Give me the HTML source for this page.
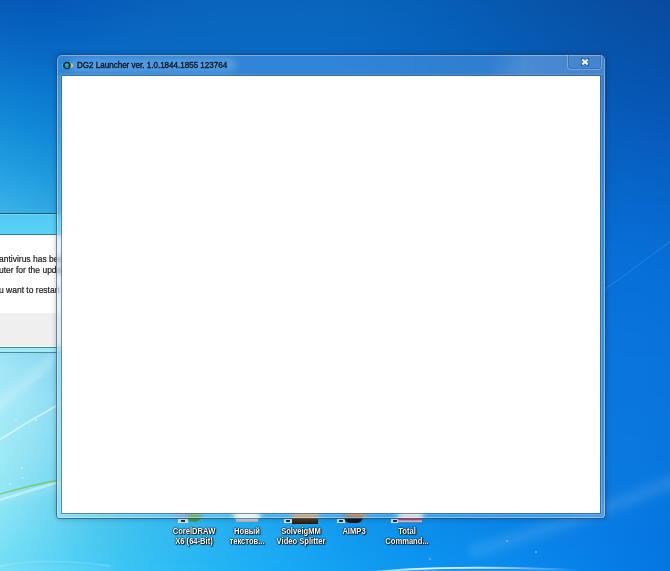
<!DOCTYPE html>
<html><head><meta charset="utf-8">
<style>
html,body{margin:0;padding:0;width:670px;height:571px;overflow:hidden;background:#0a70d0;}
body{position:relative;font-family:"Liberation Sans",sans-serif;}
#bg{position:absolute;left:0;top:0;width:670px;height:571px;overflow:hidden;}
#bg i{position:absolute;left:0;width:670px;height:4px;display:block;}
.abs{position:absolute;}
/* window */
.wout{position:absolute;left:56px;top:54px;width:550px;height:465px;box-sizing:border-box;border-radius:6px 6px 4px 4px;
 border:1px solid rgba(0,25,60,0.52);background:rgba(170,220,255,0.3);backdrop-filter:blur(3px);-webkit-backdrop-filter:blur(3px);
 box-shadow:inset 0 0 0 1px rgba(255,255,255,0.4),0 0 4px 1px rgba(0,25,70,0.2);}
.content{position:absolute;left:62px;top:76px;width:538px;height:437px;background:#fff;
 box-shadow:0 0 0 1px rgba(50,75,100,0.6), 0 0 0 2px rgba(255,255,255,0.12);}
.title{position:absolute;left:77px;top:60.2px;font-size:8.4px;line-height:10px;color:#0a1626;white-space:nowrap;transform-origin:0 0;transform:scaleX(0.96);
 -webkit-text-stroke:0.35px #0a1626;}
.glow{position:absolute;left:70px;top:58px;width:166px;height:14px;border-radius:7px;background:rgba(200,235,255,0.22);filter:blur(3px);}
.lab{position:absolute;top:526.5px;font-size:7.6px;font-weight:bold;line-height:8.9px;color:#fff;text-align:center;white-space:nowrap;transform-origin:50% 0;transform:scaleY(1.1);
 text-shadow:0 0 1px #000,0 0 1px #000,0 0 2px rgba(0,0,0,0.8),1px 1px 1px rgba(0,0,0,0.8);}
</style></head><body>
<div id="bg">
<i style="top:0px;background:linear-gradient(90deg,#075ab8 0px,#0659b8 30px,#0659b8 60px,#075cb9 90px,#085eba 120px,#0a61bb 150px,#0a62bb 180px,#0a63bc 210px,#0a63bc 240px,#0a64bc 270px,#0a64bc 300px,#0a64bc 330px,#0963bb 360px,#0861b9 390px,#085fb7 420px,#075db4 450px,#075ab1 480px,#0757ae 510px,#0755aa 540px,#0852a7 570px,#084fa4 600px,#094da1 630px,#094aa0 660px,#094a9f 670px)"></i>
<i style="top:4px;background:linear-gradient(90deg,#075bb9 0px,#065ab9 30px,#065ab9 60px,#075dba 90px,#085fbb 120px,#0a62bc 150px,#0a63bc 180px,#0a63bc 210px,#0a64bc 240px,#0a64bd 270px,#0a65bd 300px,#0a64bc 330px,#0963bb 360px,#0862ba 390px,#0860b8 420px,#075db5 450px,#075bb2 480px,#0758ae 510px,#0755ab 540px,#0852a8 570px,#0850a5 600px,#094da2 630px,#094ba0 660px,#094aa0 670px)"></i>
<i style="top:8px;background:linear-gradient(90deg,#085dba 0px,#065bba 30px,#065bba 60px,#075ebb 90px,#0860bc 120px,#0a62bc 150px,#0a63bd 180px,#0a64bd 210px,#0a65bd 240px,#0a65bd 270px,#0a65bd 300px,#0a65bd 330px,#0964bc 360px,#0862ba 390px,#0860b8 420px,#075eb6 450px,#075bb2 480px,#0758af 510px,#0755ac 540px,#0853a8 570px,#0850a5 600px,#094ea3 630px,#094ba1 660px,#094ba1 670px)"></i>
<i style="top:12px;background:linear-gradient(90deg,#085ebb 0px,#065cbb 30px,#065cbb 60px,#075ebc 90px,#0961bc 120px,#0a63bd 150px,#0a64bd 180px,#0a65bd 210px,#0a65be 240px,#0a65be 270px,#0a66be 300px,#0a65bd 330px,#0964bc 360px,#0863bb 390px,#0861b9 420px,#075eb6 450px,#075bb3 480px,#0759b0 510px,#0756ac 540px,#0853a9 570px,#0850a6 600px,#094ea3 630px,#094ca2 660px,#094ba1 670px)"></i>
<i style="top:16px;background:linear-gradient(90deg,#085fbc 0px,#065dbc 30px,#065ebc 60px,#075fbc 90px,#0962bd 120px,#0a64be 150px,#0a65be 180px,#0a65be 210px,#0a66be 240px,#0a66be 270px,#0a66be 300px,#0a66be 330px,#0965bd 360px,#0863bc 390px,#0761ba 420px,#075eb7 450px,#075cb4 480px,#0759b0 510px,#0756ad 540px,#0854aa 570px,#0851a7 600px,#084ea4 630px,#094ca2 660px,#094ba2 670px)"></i>
<i style="top:20px;background:linear-gradient(90deg,#0860bd 0px,#065ebc 30px,#065fbd 60px,#0760bd 90px,#0963be 120px,#0a65be 150px,#0a65bf 180px,#0a66bf 210px,#0a66bf 240px,#0a66bf 270px,#0a67bf 300px,#0a66bf 330px,#0965be 360px,#0863bc 390px,#0761ba 420px,#075fb7 450px,#075cb4 480px,#0759b1 510px,#0757ae 540px,#0754aa 570px,#0851a7 600px,#084fa5 630px,#094da3 660px,#094ca3 670px)"></i>
<i style="top:24px;background:linear-gradient(90deg,#0962be 0px,#075fbd 30px,#0660be 60px,#0761be 90px,#0964bf 120px,#0a65bf 150px,#0a66bf 180px,#0a66bf 210px,#0967bf 240px,#0967c0 270px,#0a67bf 300px,#0a67bf 330px,#0965be 360px,#0864bd 390px,#0762bb 420px,#075fb8 450px,#075db5 480px,#075ab2 510px,#0757ae 540px,#0754ab 570px,#0852a8 600px,#084fa5 630px,#084da4 660px,#084ca3 670px)"></i>
<i style="top:28px;background:linear-gradient(90deg,#0963bf 0px,#0761be 30px,#0661bf 60px,#0762bf 90px,#0964bf 120px,#0a66c0 150px,#0a67c0 180px,#0a67c0 210px,#0967c0 240px,#0967c0 270px,#0967c0 300px,#0967c0 330px,#0966bf 360px,#0864bd 390px,#0762bb 420px,#0760b9 450px,#075db6 480px,#075ab2 510px,#0757af 540px,#0755ac 570px,#0852a9 600px,#0850a6 630px,#084da5 660px,#084da4 670px)"></i>
<i style="top:32px;background:linear-gradient(90deg,#0965c0 0px,#0762c0 30px,#0662c0 60px,#0763c0 90px,#0965c0 120px,#0a67c0 150px,#0a67c0 180px,#0a67c0 210px,#0968c1 240px,#0968c1 270px,#0968c1 300px,#0967c0 330px,#0966bf 360px,#0864be 390px,#0762bc 420px,#0760b9 450px,#075db6 480px,#075bb3 510px,#0758b0 540px,#0755ad 570px,#0753aa 600px,#0850a7 630px,#084ea5 660px,#084da5 670px)"></i>
<i style="top:36px;background:linear-gradient(90deg,#0966c1 0px,#0764c1 30px,#0763c1 60px,#0765c1 90px,#0966c1 120px,#0a67c1 150px,#0a68c1 180px,#0968c1 210px,#0968c1 240px,#0968c1 270px,#0968c1 300px,#0968c1 330px,#0967c0 360px,#0865be 390px,#0763bc 420px,#0760ba 450px,#065eb7 480px,#075bb4 510px,#0758b0 540px,#0756ad 570px,#0753aa 600px,#0851a8 630px,#084ea6 660px,#084ea6 670px)"></i>
<i style="top:40px;background:linear-gradient(90deg,#0a68c3 0px,#0765c2 30px,#0765c1 60px,#0766c1 90px,#0867c2 120px,#0a68c2 150px,#0a68c2 180px,#0968c2 210px,#0968c2 240px,#0969c2 270px,#0969c2 300px,#0968c1 330px,#0967c0 360px,#0865bf 390px,#0763bd 420px,#0761ba 450px,#065eb7 480px,#065bb4 510px,#0759b1 540px,#0756ae 570px,#0753ab 600px,#0751a9 630px,#084fa7 660px,#084ea6 670px)"></i>
<i style="top:44px;background:linear-gradient(90deg,#0a69c4 0px,#0867c3 30px,#0766c2 60px,#0767c2 90px,#0868c2 120px,#0969c2 150px,#0a69c2 180px,#0969c2 210px,#0969c2 240px,#0969c2 270px,#0969c2 300px,#0968c2 330px,#0867c1 360px,#0865bf 390px,#0763bd 420px,#0761bb 450px,#065eb8 480px,#065cb5 510px,#0759b2 540px,#0756af 570px,#0754ac 600px,#0751a9 630px,#084fa8 660px,#084fa7 670px)"></i>
<i style="top:48px;background:linear-gradient(90deg,#0a6bc5 0px,#0868c4 30px,#0767c3 60px,#0768c3 90px,#0869c3 120px,#0969c3 150px,#0969c3 180px,#0969c3 210px,#0969c3 240px,#0969c3 270px,#0969c3 300px,#0969c2 330px,#0867c1 360px,#0866c0 390px,#0764be 420px,#0661bb 450px,#065fb9 480px,#065cb6 510px,#0759b3 540px,#0757af 570px,#0754ad 600px,#0752aa 630px,#0750a8 660px,#084fa8 670px)"></i>
<i style="top:52px;background:linear-gradient(90deg,#0b6dc6 0px,#086ac5 30px,#0769c4 60px,#0769c4 90px,#0869c4 120px,#096ac4 150px,#096ac3 180px,#096ac3 210px,#096ac3 240px,#096ac3 270px,#0969c3 300px,#0969c3 330px,#0868c2 360px,#0766c0 390px,#0764be 420px,#0662bc 450px,#065fb9 480px,#065cb6 510px,#065ab3 540px,#0757b0 570px,#0755ad 600px,#0752ab 630px,#0750a9 660px,#074fa9 670px)"></i>
<i style="top:56px;background:linear-gradient(90deg,#0b6ec7 0px,#086bc6 30px,#076ac5 60px,#086ac5 90px,#086ac4 120px,#096ac4 150px,#096ac4 180px,#096ac4 210px,#096ac4 240px,#096ac4 270px,#096ac4 300px,#0969c3 330px,#0868c2 360px,#0766c1 390px,#0764bf 420px,#0662bd 450px,#065fba 480px,#065db7 510px,#065ab4 540px,#0758b1 570px,#0755ae 600px,#0753ac 630px,#0751aa 660px,#0750aa 670px)"></i>
<i style="top:60px;background:linear-gradient(90deg,#0c70c8 0px,#096dc7 30px,#086cc6 60px,#086bc6 90px,#086bc5 120px,#096bc5 150px,#096bc4 180px,#096bc4 210px,#096ac4 240px,#096ac4 270px,#096ac4 300px,#0869c4 330px,#0868c3 360px,#0766c1 390px,#0764bf 420px,#0662bd 450px,#0660ba 480px,#065db8 510px,#065bb5 540px,#0758b2 570px,#0755af 600px,#0753ad 630px,#0751ab 660px,#0750aa 670px)"></i>
<i style="top:64px;background:linear-gradient(90deg,#0c72c9 0px,#096fc8 30px,#086dc7 60px,#086cc6 90px,#086cc6 120px,#096cc5 150px,#096bc5 180px,#096bc5 210px,#086bc5 240px,#086bc5 270px,#086ac5 300px,#086ac4 330px,#0868c3 360px,#0767c2 390px,#0765c0 420px,#0662be 450px,#0660bb 480px,#065eb8 510px,#065bb5 540px,#0758b3 570px,#0756b0 600px,#0753ad 630px,#0751ac 660px,#0751ab 670px)"></i>
<i style="top:68px;background:linear-gradient(90deg,#0d74ca 0px,#0971ca 30px,#086fc8 60px,#086dc7 90px,#086dc6 120px,#096cc6 150px,#096cc6 180px,#086bc5 210px,#086bc5 240px,#086bc5 270px,#086bc5 300px,#086ac5 330px,#0869c4 360px,#0767c2 390px,#0665c0 420px,#0663be 450px,#0660bc 480px,#065eb9 510px,#065bb6 540px,#0659b3 570px,#0756b1 600px,#0654ae 630px,#0752ad 660px,#0751ac 670px)"></i>
<i style="top:72px;background:linear-gradient(90deg,#0d75cc 0px,#0a72cb 30px,#0870c9 60px,#086fc8 90px,#086ec7 120px,#086dc6 150px,#086cc6 180px,#086cc6 210px,#086cc6 240px,#086bc6 270px,#086bc5 300px,#086ac5 330px,#0769c4 360px,#0767c3 390px,#0665c1 420px,#0663bf 450px,#0661bc 480px,#065eba 510px,#065cb7 540px,#0659b4 570px,#0657b1 600px,#0654af 630px,#0752ad 660px,#0752ad 670px)"></i>
<i style="top:76px;background:linear-gradient(90deg,#0e77cd 0px,#0a74cc 30px,#0972ca 60px,#0870c9 90px,#086ec8 120px,#086dc7 150px,#086dc7 180px,#086cc6 210px,#086cc6 240px,#086cc6 270px,#086bc6 300px,#086ac5 330px,#0769c4 360px,#0767c3 390px,#0665c1 420px,#0663bf 450px,#0661bd 480px,#065fba 510px,#065cb8 540px,#065ab5 570px,#0657b2 600px,#0655b0 630px,#0753ae 660px,#0752ae 670px)"></i>
<i style="top:80px;background:linear-gradient(90deg,#0e79ce 0px,#0b76cd 30px,#0973cb 60px,#0871ca 90px,#086fc8 120px,#086ec8 150px,#086dc7 180px,#086dc7 210px,#086cc7 240px,#086cc6 270px,#086bc6 300px,#086bc6 330px,#0769c5 360px,#0768c4 390px,#0666c2 420px,#0664c0 450px,#0661bd 480px,#065fbb 510px,#065db8 540px,#065ab6 570px,#0658b3 600px,#0655b1 630px,#0753af 660px,#0753af 670px)"></i>
<i style="top:84px;background:linear-gradient(90deg,#0f7bcf 0px,#0b77ce 30px,#0975cc 60px,#0972ca 90px,#0870c9 120px,#086fc8 150px,#086ec8 180px,#086dc7 210px,#086dc7 240px,#086cc7 270px,#086cc7 300px,#076bc6 330px,#0769c5 360px,#0768c4 390px,#0666c2 420px,#0664c0 450px,#0662be 480px,#065fbc 510px,#065db9 540px,#065bb6 570px,#0658b4 600px,#0656b2 630px,#0754b0 660px,#0753b0 670px)"></i>
<i style="top:88px;background:linear-gradient(90deg,#0f7dd0 0px,#0c79cf 30px,#0a76cd 60px,#0973cb 90px,#0871ca 120px,#086fc9 150px,#086ec8 180px,#086ec8 210px,#086dc8 240px,#086dc7 270px,#086cc7 300px,#076bc7 330px,#076ac6 360px,#0668c5 390px,#0666c3 420px,#0664c1 450px,#0662bf 480px,#0660bc 510px,#065dba 540px,#065bb7 570px,#0659b5 600px,#0656b3 630px,#0754b1 660px,#0754b0 670px)"></i>
<i style="top:92px;background:linear-gradient(90deg,#107ed1 0px,#0c7bd0 30px,#0a78ce 60px,#0974cc 90px,#0972ca 120px,#0870c9 150px,#086fc9 180px,#086ec8 210px,#086dc8 240px,#086dc8 270px,#076cc8 300px,#076bc7 330px,#076ac6 360px,#0668c5 390px,#0666c3 420px,#0664c1 450px,#0662bf 480px,#0660bd 510px,#065eba 540px,#065bb8 570px,#0659b6 600px,#0657b4 630px,#0755b2 660px,#0754b1 670px)"></i>
<i style="top:96px;background:linear-gradient(90deg,#1080d2 0px,#0d7dd1 30px,#0b79cf 60px,#0976cd 90px,#0973cb 120px,#0871ca 150px,#086fc9 180px,#086ec9 210px,#086ec8 240px,#076dc8 270px,#076cc8 300px,#076bc7 330px,#076ac7 360px,#0668c5 390px,#0666c4 420px,#0665c2 450px,#0662c0 480px,#0660be 510px,#065ebb 540px,#065cb9 570px,#065ab6 600px,#0657b4 630px,#0756b3 660px,#0755b2 670px)"></i>
<i style="top:100px;background:linear-gradient(90deg,#1182d3 0px,#0d7ed2 30px,#0b7bd0 60px,#0a77cd 90px,#0974cc 120px,#0871ca 150px,#0870ca 180px,#086fc9 210px,#086ec9 240px,#076ec9 270px,#076dc8 300px,#076cc8 330px,#066ac7 360px,#0668c6 390px,#0667c4 420px,#0665c3 450px,#0663c0 480px,#0661be 510px,#065fbc 540px,#065cba 570px,#065ab7 600px,#0658b5 630px,#0756b4 660px,#0756b3 670px)"></i>
<i style="top:104px;background:linear-gradient(90deg,#1284d4 0px,#0e80d3 30px,#0c7cd0 60px,#0a78ce 90px,#0975cc 120px,#0872cb 150px,#0870ca 180px,#086fca 210px,#086fc9 240px,#076ec9 270px,#076dc9 300px,#076cc8 330px,#066ac7 360px,#0669c6 390px,#0667c5 420px,#0565c3 450px,#0563c1 480px,#0661bf 510px,#065fbd 540px,#065dba 570px,#065bb8 600px,#0758b6 630px,#0757b5 660px,#0756b4 670px)"></i>
<i style="top:108px;background:linear-gradient(90deg,#1386d5 0px,#0e82d4 30px,#0c7ed1 60px,#0b79cf 90px,#0976cd 120px,#0873cb 150px,#0871cb 180px,#0870ca 210px,#086fca 240px,#076ec9 270px,#076dc9 300px,#076cc9 330px,#066ac8 360px,#0669c7 390px,#0667c5 420px,#0565c4 450px,#0563c2 480px,#0661c0 510px,#065fbd 540px,#065dbb 570px,#065bb9 600px,#0759b7 630px,#0757b5 660px,#0757b5 670px)"></i>
<i style="top:112px;background:linear-gradient(90deg,#1388d6 0px,#0f84d4 30px,#0d7fd2 60px,#0b7bcf 90px,#0a77cd 120px,#0973cc 150px,#0871cb 180px,#0870ca 210px,#086fca 240px,#076fca 270px,#076dca 300px,#076cc9 330px,#066bc8 360px,#0669c7 390px,#0567c6 420px,#0565c4 450px,#0564c2 480px,#0662c0 510px,#0660be 540px,#065ebc 570px,#075cba 600px,#075ab8 630px,#0758b6 660px,#0757b6 670px)"></i>
<i style="top:116px;background:linear-gradient(90deg,#1489d7 0px,#1085d5 30px,#0d81d3 60px,#0c7cd0 90px,#0a78ce 120px,#0974cc 150px,#0872cb 180px,#0871cb 210px,#0870cb 240px,#076fca 270px,#076eca 300px,#066cc9 330px,#066bc9 360px,#0669c8 390px,#0567c6 420px,#0566c5 450px,#0564c3 480px,#0662c1 510px,#0660bf 540px,#065ebd 570px,#075cbb 600px,#075ab9 630px,#0758b7 660px,#0758b7 670px)"></i>
<i style="top:120px;background:linear-gradient(90deg,#158bd7 0px,#1087d6 30px,#0e82d3 60px,#0c7dd1 90px,#0a79cf 120px,#0975cd 150px,#0873cc 180px,#0871cb 210px,#0870cb 240px,#076fcb 270px,#076eca 300px,#066dca 330px,#066bc9 360px,#0669c8 390px,#0568c7 420px,#0566c5 450px,#0564c3 480px,#0662c2 510px,#0661c0 540px,#065fbe 570px,#075dbc 600px,#075bba 630px,#0759b8 660px,#0758b8 670px)"></i>
<i style="top:124px;background:linear-gradient(90deg,#168dd8 0px,#1189d7 30px,#0f84d4 60px,#0d7fd1 90px,#0b7acf 120px,#0976cd 150px,#0873cc 180px,#0872cc 210px,#0871cb 240px,#0770cb 270px,#076ecb 300px,#066dca 330px,#066bc9 360px,#056ac8 390px,#0568c7 420px,#0566c6 450px,#0564c4 480px,#0663c2 510px,#0661c0 540px,#065fbe 570px,#075dbd 600px,#075bbb 630px,#075ab9 660px,#0759b9 670px)"></i>
<i style="top:128px;background:linear-gradient(90deg,#178fd9 0px,#128ad8 30px,#1085d5 60px,#0e80d2 90px,#0b7bd0 120px,#0a76ce 150px,#0974cd 180px,#0873cc 210px,#0871cc 240px,#0770cb 270px,#076fcb 300px,#066dca 330px,#066bca 360px,#056ac9 390px,#0568c8 420px,#0566c6 450px,#0565c5 480px,#0663c3 510px,#0661c1 540px,#0660bf 570px,#075ebd 600px,#075cbc 630px,#075aba 660px,#075aba 670px)"></i>
<i style="top:132px;background:linear-gradient(90deg,#1891da 0px,#138cd8 30px,#1187d5 60px,#0e81d3 90px,#0c7cd0 120px,#0a77ce 150px,#0975cd 180px,#0873cd 210px,#0872cc 240px,#0770cc 270px,#076fcb 300px,#066dcb 330px,#066cca 360px,#056ac9 390px,#0568c8 420px,#0567c7 450px,#0565c5 480px,#0563c4 510px,#0662c2 540px,#0660c0 570px,#075ebe 600px,#075dbd 630px,#075bbb 660px,#075abb 670px)"></i>
<i style="top:136px;background:linear-gradient(90deg,#1992db 0px,#148ed9 30px,#1288d6 60px,#0f83d3 90px,#0c7dd1 120px,#0a78cf 150px,#0975ce 180px,#0974cd 210px,#0872cd 240px,#0771cc 270px,#076fcc 300px,#066dcb 330px,#066cca 360px,#056aca 390px,#0568c8 420px,#0567c7 450px,#0565c6 480px,#0564c4 510px,#0662c3 540px,#0661c1 570px,#075fbf 600px,#075dbd 630px,#085bbc 660px,#075bbb 670px)"></i>
<i style="top:140px;background:linear-gradient(90deg,#1a94db 0px,#1590da 30px,#138ad7 60px,#1084d4 90px,#0d7ed1 120px,#0b79cf 150px,#0a76ce 180px,#0974ce 210px,#0873cd 240px,#0771cd 270px,#076fcc 300px,#066ecc 330px,#056ccb 360px,#056aca 390px,#0569c9 420px,#0567c8 450px,#0566c6 480px,#0564c5 510px,#0663c3 540px,#0661c2 570px,#075fc0 600px,#085ebe 630px,#085cbd 660px,#085cbc 670px)"></i>
<i style="top:144px;background:linear-gradient(90deg,#1c96dc 0px,#1691da 30px,#148cd7 60px,#1185d5 90px,#0e7fd2 120px,#0b7ad0 150px,#0a77cf 180px,#0975ce 210px,#0873ce 240px,#0772cd 270px,#0770cd 300px,#066ecc 330px,#056ccb 360px,#056aca 390px,#0569c9 420px,#0567c8 450px,#0566c7 480px,#0564c5 510px,#0663c4 540px,#0662c3 570px,#0760c1 600px,#085ebf 630px,#085dbe 660px,#085cbd 670px)"></i>
<i style="top:148px;background:linear-gradient(90deg,#1d98dd 0px,#1793db 30px,#158dd8 60px,#1287d5 90px,#0f80d3 120px,#0c7bd0 150px,#0a78cf 180px,#0976cf 210px,#0874ce 240px,#0772cd 270px,#0770cd 300px,#066ecc 330px,#056ccc 360px,#056acb 390px,#0569ca 420px,#0567c9 450px,#0566c7 480px,#0565c6 510px,#0663c5 540px,#0762c3 570px,#0761c2 600px,#085fc0 630px,#085dbf 660px,#085dbe 670px)"></i>
<i style="top:152px;background:linear-gradient(90deg,#1e99dd 0px,#1895db 30px,#168fd9 60px,#1388d6 90px,#0f82d3 120px,#0d7cd1 150px,#0b79d0 180px,#0a77cf 210px,#0975ce 240px,#0872ce 270px,#0770cd 300px,#066ecd 330px,#056ccc 360px,#056bcb 390px,#0569ca 420px,#0568c9 450px,#0566c8 480px,#0565c7 510px,#0664c5 540px,#0763c4 570px,#0761c3 600px,#0860c1 630px,#085ec0 660px,#085dbf 670px)"></i>
<i style="top:156px;background:linear-gradient(90deg,#209bde 0px,#1a96dc 30px,#1790d9 60px,#148ad6 90px,#1083d4 120px,#0d7dd2 150px,#0b7ad0 180px,#0a77cf 210px,#0975cf 240px,#0873ce 270px,#0771ce 300px,#066ecd 330px,#056dcc 360px,#056bcb 390px,#0569cb 420px,#0568ca 450px,#0567c8 480px,#0566c7 510px,#0664c6 540px,#0763c5 570px,#0762c4 600px,#0860c2 630px,#085fc1 660px,#085ec0 670px)"></i>
<i style="top:160px;background:linear-gradient(90deg,#219ddf 0px,#1b98dd 30px,#1892da 60px,#158bd7 90px,#1184d4 120px,#0e7ed2 150px,#0c7bd1 180px,#0b78d0 210px,#0976cf 240px,#0873cf 270px,#0771ce 300px,#066fcd 330px,#056dcd 360px,#056bcc 390px,#0569cb 420px,#0568ca 450px,#0567c9 480px,#0566c8 510px,#0665c7 540px,#0764c6 570px,#0762c4 600px,#0861c3 630px,#085fc2 660px,#085fc1 670px)"></i>
<i style="top:164px;background:linear-gradient(90deg,#239fdf 0px,#1c9add 30px,#1994da 60px,#168dd8 90px,#1286d5 120px,#0f80d3 150px,#0d7cd1 180px,#0b79d0 210px,#0976d0 240px,#0874cf 270px,#0771ce 300px,#066fce 330px,#056dcd 360px,#056bcc 390px,#046acb 420px,#0568ca 450px,#0567ca 480px,#0566c9 510px,#0665c8 540px,#0764c7 570px,#0763c5 600px,#0861c4 630px,#0860c3 660px,#085fc2 670px)"></i>
<i style="top:168px;background:linear-gradient(90deg,#25a0e0 0px,#1e9bde 30px,#1b95db 60px,#178ed8 90px,#1487d6 120px,#1081d3 150px,#0d7dd2 180px,#0c7ad1 210px,#0a77d0 240px,#0874cf 270px,#0772cf 300px,#066fce 330px,#056dcd 360px,#056bcd 390px,#046acc 420px,#0569cb 450px,#0568ca 480px,#0567c9 510px,#0666c8 540px,#0765c7 570px,#0763c6 600px,#0862c5 630px,#0861c4 660px,#0860c3 670px)"></i>
<i style="top:172px;background:linear-gradient(90deg,#26a2e0 0px,#209dde 30px,#1c97dc 60px,#1990d9 90px,#1589d6 120px,#1182d4 150px,#0e7ed2 180px,#0c7bd1 210px,#0a78d0 240px,#0875d0 270px,#0772cf 300px,#066fce 330px,#056dce 360px,#056bcd 390px,#046acc 420px,#0569cb 450px,#0568cb 480px,#0567ca 510px,#0666c9 540px,#0765c8 570px,#0764c7 600px,#0863c6 630px,#0861c4 660px,#0861c4 670px)"></i>
<i style="top:176px;background:linear-gradient(90deg,#28a4e1 0px,#219fdf 30px,#1e98dc 60px,#1a91d9 90px,#168ad7 120px,#1284d4 150px,#0f7fd3 180px,#0d7cd2 210px,#0b78d1 240px,#0975d0 270px,#0772cf 300px,#0670cf 330px,#056dce 360px,#046ccd 390px,#046acd 420px,#0469cc 450px,#0568cb 480px,#0567ca 510px,#0666ca 540px,#0766c9 570px,#0765c8 600px,#0863c7 630px,#0862c5 660px,#0861c5 670px)"></i>
<i style="top:180px;background:linear-gradient(90deg,#2aa6e2 0px,#23a1e0 30px,#1f9add 60px,#1c93da 90px,#178bd7 120px,#1385d5 150px,#1080d3 180px,#0d7dd2 210px,#0b79d1 240px,#0976d0 270px,#0773d0 300px,#0670cf 330px,#056ece 360px,#046cce 390px,#046acd 420px,#0469cc 450px,#0568cc 480px,#0568cb 510px,#0667ca 540px,#0766ca 570px,#0765c9 600px,#0864c8 630px,#0863c6 660px,#0862c6 670px)"></i>
<i style="top:184px;background:linear-gradient(90deg,#2ca7e2 0px,#25a2e0 30px,#219cdd 60px,#1d94db 90px,#198dd8 120px,#1486d6 150px,#1182d4 180px,#0e7ed3 210px,#0b7ad2 240px,#0976d1 270px,#0773d0 300px,#0670cf 330px,#056ecf 360px,#046cce 390px,#046bcd 420px,#0469cd 450px,#0569cc 480px,#0568cc 510px,#0667cb 540px,#0767ca 570px,#0766ca 600px,#0865c9 630px,#0863c7 660px,#0863c7 670px)"></i>
<i style="top:188px;background:linear-gradient(90deg,#2fa9e3 0px,#27a4e1 30px,#239dde 60px,#1f96db 90px,#1a8ed8 120px,#1588d6 150px,#1283d4 180px,#0f7ed3 210px,#0c7bd2 240px,#0977d1 270px,#0773d0 300px,#0670d0 330px,#056ecf 360px,#046cce 390px,#046bce 420px,#046acd 450px,#0569cd 480px,#0568cc 510px,#0668cc 540px,#0767cb 570px,#0766cb 600px,#0865ca 630px,#0864c8 660px,#0863c8 670px)"></i>
<i style="top:192px;background:linear-gradient(90deg,#31abe3 0px,#29a5e1 30px,#259fdf 60px,#2097dc 90px,#1b90d9 120px,#1789d7 150px,#1384d5 180px,#0f7fd4 210px,#0c7bd2 240px,#0a77d2 270px,#0874d1 300px,#0671d0 330px,#056ecf 360px,#046ccf 390px,#046bce 420px,#046ace 450px,#0569cd 480px,#0569cd 510px,#0668cc 540px,#0768cc 570px,#0767cb 600px,#0866cb 630px,#0865c9 660px,#0764c9 670px)"></i>
<i style="top:196px;background:linear-gradient(90deg,#33ace4 0px,#2ca7e2 30px,#27a0df 60px,#2299dc 90px,#1d91da 120px,#188bd7 150px,#1485d5 180px,#1080d4 210px,#0d7cd3 240px,#0a78d2 270px,#0874d1 300px,#0671d0 330px,#056ed0 360px,#046dcf 390px,#046bcf 420px,#046ace 450px,#0569ce 480px,#0569cd 510px,#0668cd 540px,#0768cd 570px,#0767cc 600px,#0767cb 630px,#0765ca 660px,#0765ca 670px)"></i>
<i style="top:200px;background:linear-gradient(90deg,#36aee5 0px,#2ea9e2 30px,#29a2e0 60px,#249bdd 90px,#1e93da 120px,#198cd8 150px,#1586d6 180px,#1181d4 210px,#0d7dd3 240px,#0a79d2 270px,#0875d1 300px,#0671d1 330px,#056fd0 360px,#046dcf 390px,#046bcf 420px,#046ace 450px,#056ace 480px,#0569ce 510px,#0669ce 540px,#0769cd 570px,#0768cd 600px,#0767cc 630px,#0766cb 660px,#0765ca 670px)"></i>
<i style="top:204px;background:linear-gradient(90deg,#38b0e5 0px,#31aae3 30px,#2ba4e0 60px,#269cde 90px,#2095db 120px,#1a8ed8 150px,#1688d6 180px,#1183d5 210px,#0e7ed4 240px,#0b79d3 270px,#0875d2 300px,#0672d1 330px,#056fd0 360px,#046dd0 390px,#046ccf 420px,#046bcf 450px,#056acf 480px,#056ace 510px,#0669ce 540px,#0769ce 570px,#0769ce 600px,#0768cd 630px,#0767cc 660px,#0766cb 670px)"></i>
<i style="top:208px;background:linear-gradient(90deg,#3bb1e6 0px,#33ace4 30px,#2da5e1 60px,#279ede 90px,#2296db 120px,#1c8fd9 150px,#1789d7 180px,#1284d5 210px,#0e7fd4 240px,#0b7ad3 270px,#0875d2 300px,#0672d1 330px,#056fd1 360px,#046dd0 390px,#046cd0 420px,#046bcf 450px,#056acf 480px,#056acf 510px,#066acf 540px,#0769cf 570px,#0769cf 600px,#0769ce 630px,#0767cd 660px,#0767cc 670px)"></i>
<i style="top:212px;background:linear-gradient(90deg,#3db3e6 0px,#36aee4 30px,#2fa7e2 60px,#299fdf 90px,#2398dc 120px,#1d90d9 150px,#188ad7 180px,#1385d6 210px,#0f7fd5 240px,#0b7ad3 270px,#0976d2 300px,#0672d2 330px,#056fd1 360px,#046dd0 390px,#046cd0 420px,#046bd0 450px,#056bcf 480px,#056acf 510px,#066acf 540px,#076acf 570px,#076acf 600px,#0769cf 630px,#0768ce 660px,#0767cd 670px)"></i>
<i style="top:216px;background:linear-gradient(90deg,#40b5e7 0px,#38afe5 30px,#32a8e2 60px,#2ba1df 90px,#2599dc 120px,#1f92da 150px,#198bd8 180px,#1486d6 210px,#1080d5 240px,#0c7bd4 270px,#0976d3 300px,#0772d2 330px,#0570d1 360px,#046dd1 390px,#046cd0 420px,#046bd0 450px,#056bd0 480px,#066bd0 510px,#066ad0 540px,#076ad0 570px,#076ad0 600px,#076ad0 630px,#0768ce 660px,#0768ce 670px)"></i>
<i style="top:220px;background:linear-gradient(90deg,#43b6e7 0px,#3bb1e5 30px,#34aae3 60px,#2da2e0 90px,#279bdd 120px,#2093db 150px,#1a8dd8 180px,#1587d7 210px,#1081d5 240px,#0c7cd4 270px,#0977d3 300px,#0773d2 330px,#0570d2 360px,#046ed1 390px,#046cd1 420px,#046cd0 450px,#056bd0 480px,#066bd0 510px,#066bd0 540px,#076bd1 570px,#076bd1 600px,#076ad1 630px,#0769cf 660px,#0768cf 670px)"></i>
<i style="top:224px;background:linear-gradient(90deg,#45b8e8 0px,#3db2e6 30px,#36ace3 60px,#2fa4e0 90px,#289cde 120px,#2295db 150px,#1b8ed9 180px,#1688d7 210px,#1182d6 240px,#0d7cd4 270px,#0977d3 300px,#0773d3 330px,#0570d2 360px,#046ed1 390px,#046dd1 420px,#046cd1 450px,#056bd1 480px,#066bd1 510px,#066bd1 540px,#076bd1 570px,#076bd2 600px,#076bd1 630px,#076ad0 660px,#0769cf 670px)"></i>
<i style="top:228px;background:linear-gradient(90deg,#48bae8 0px,#40b4e6 30px,#39ade4 60px,#32a6e1 90px,#2a9ede 120px,#2396dc 150px,#1c8fd9 180px,#1689d8 210px,#1183d6 240px,#0d7dd5 270px,#0a78d4 300px,#0773d3 330px,#0570d2 360px,#046ed2 390px,#046dd1 420px,#046cd1 450px,#056cd1 480px,#066bd1 510px,#066cd2 540px,#076cd2 570px,#076cd2 600px,#076bd2 630px,#076ad1 660px,#076ad0 670px)"></i>
<i style="top:232px;background:linear-gradient(90deg,#4bbbe9 0px,#43b6e7 30px,#3bafe4 60px,#34a7e1 90px,#2c9fdf 120px,#2498dc 150px,#1d91da 180px,#178ad8 210px,#1284d6 240px,#0d7dd5 270px,#0a78d4 300px,#0774d3 330px,#0570d2 360px,#056ed2 390px,#046dd2 420px,#046cd2 450px,#056cd2 480px,#066cd2 510px,#066cd2 540px,#076cd2 570px,#076cd3 600px,#076cd3 630px,#076bd2 660px,#076ad1 670px)"></i>
<i style="top:236px;background:linear-gradient(90deg,#4ebdea 0px,#46b7e7 30px,#3eb0e5 60px,#36a9e2 90px,#2ea1df 120px,#2699dd 150px,#1f92da 180px,#188bd8 210px,#1384d7 240px,#0e7ed6 270px,#0a79d4 300px,#0774d3 330px,#0671d3 360px,#056fd2 390px,#046dd2 420px,#056cd2 450px,#056cd2 480px,#066cd2 510px,#066cd3 540px,#076dd3 570px,#076dd4 600px,#076dd4 630px,#076bd2 660px,#076bd2 670px)"></i>
<i style="top:240px;background:linear-gradient(90deg,#51beea 0px,#48b9e8 30px,#40b2e5 60px,#38aae3 90px,#30a2e0 120px,#289add 150px,#2093db 180px,#198cd9 210px,#1385d7 240px,#0e7fd6 270px,#0a79d5 300px,#0774d4 330px,#0671d3 360px,#056fd3 390px,#046dd2 420px,#056dd2 450px,#056cd2 480px,#066cd3 510px,#066dd3 540px,#076dd4 570px,#076dd4 600px,#076dd4 630px,#076cd3 660px,#076bd2 670px)"></i>
<i style="top:244px;background:linear-gradient(90deg,#54c0eb 0px,#4bbae9 30px,#43b3e6 60px,#3aace3 90px,#32a4e0 120px,#299cde 150px,#2194db 180px,#1a8dd9 210px,#1486d8 240px,#0f7fd6 270px,#0b79d5 300px,#0875d4 330px,#0671d3 360px,#056fd3 390px,#046ed3 420px,#056dd3 450px,#056dd3 480px,#066dd3 510px,#066dd4 540px,#076dd4 570px,#076ed5 600px,#076ed5 630px,#076cd4 660px,#076cd3 670px)"></i>
<i style="top:248px;background:linear-gradient(90deg,#57c1eb 0px,#4ebce9 30px,#45b5e6 60px,#3dade4 90px,#33a5e1 120px,#2b9dde 150px,#2296dc 180px,#1b8eda 210px,#1587d8 240px,#0f80d7 270px,#0b7ad5 300px,#0875d4 330px,#0671d4 360px,#056fd3 390px,#046ed3 420px,#056dd3 450px,#056dd3 480px,#066dd3 510px,#076dd4 540px,#076ed5 570px,#076ed5 600px,#076ed5 630px,#076dd4 660px,#076cd4 670px)"></i>
<i style="top:252px;background:linear-gradient(90deg,#59c3ec 0px,#51bdea 30px,#48b6e7 60px,#3fafe4 90px,#35a6e1 120px,#2c9edf 150px,#2497dc 180px,#1c8fda 210px,#1588d8 240px,#1081d7 270px,#0b7ad6 300px,#0875d5 330px,#0672d4 360px,#056fd3 390px,#056ed3 420px,#056dd3 450px,#056dd3 480px,#066dd4 510px,#076ed4 540px,#076ed5 570px,#076ed6 600px,#076ed6 630px,#076dd5 660px,#076dd4 670px)"></i>
<i style="top:256px;background:linear-gradient(90deg,#5cc5ec 0px,#54bfea 30px,#4bb8e7 60px,#41b0e5 90px,#37a8e2 120px,#2ea0df 150px,#2598dd 180px,#1d90db 210px,#1689d9 240px,#1081d7 270px,#0c7bd6 300px,#0876d5 330px,#0672d4 360px,#0570d4 390px,#056ed4 420px,#056ed4 450px,#056ed4 480px,#066ed4 510px,#076ed5 540px,#076ed6 570px,#076fd6 600px,#076fd7 630px,#076ed5 660px,#076dd5 670px)"></i>
<i style="top:260px;background:linear-gradient(90deg,#5fc6ed 0px,#57c0eb 30px,#4db9e8 60px,#43b2e5 90px,#39a9e2 120px,#2fa1df 150px,#2699dd 180px,#1e91db 210px,#178ad9 240px,#1182d8 270px,#0c7bd6 300px,#0876d5 330px,#0672d4 360px,#0570d4 390px,#056fd4 420px,#056ed4 450px,#056ed4 480px,#066ed5 510px,#076ed5 540px,#076fd6 570px,#086fd7 600px,#076fd7 630px,#076ed6 660px,#076dd5 670px)"></i>
<i style="top:264px;background:linear-gradient(90deg,#62c8ed 0px,#59c2eb 30px,#50bbe8 60px,#46b3e6 90px,#3babe3 120px,#31a2e0 150px,#279ade 180px,#1f92db 210px,#178ada 240px,#1183d8 270px,#0c7cd7 300px,#0976d5 330px,#0673d5 360px,#0570d4 390px,#056fd4 420px,#056ed4 450px,#056ed4 480px,#066ed5 510px,#076fd6 540px,#076fd6 570px,#086fd7 600px,#0770d7 630px,#076ed6 660px,#076ed6 670px)"></i>
<i style="top:268px;background:linear-gradient(90deg,#65c9ee 0px,#5cc3ec 30px,#52bce9 60px,#48b4e6 90px,#3dace3 120px,#32a4e0 150px,#289cde 180px,#2094dc 210px,#188bda 240px,#1283d8 270px,#0d7cd7 300px,#0977d6 330px,#0673d5 360px,#0571d5 390px,#056fd4 420px,#056fd5 450px,#056ed5 480px,#066fd5 510px,#076fd6 540px,#086fd7 570px,#0870d7 600px,#0770d8 630px,#076fd7 660px,#076ed6 670px)"></i>
<i style="top:272px;background:linear-gradient(90deg,#68cbee 0px,#5fc5ec 30px,#55bee9 60px,#4ab6e7 90px,#3fade4 120px,#34a5e1 150px,#2a9dde 180px,#2195dc 210px,#198cda 240px,#1284d9 270px,#0d7dd7 300px,#0977d6 330px,#0773d5 360px,#0571d5 390px,#0570d5 420px,#056fd5 450px,#066fd5 480px,#066fd6 510px,#076fd6 540px,#0870d7 570px,#0870d8 600px,#0870d8 630px,#076fd7 660px,#076ed6 670px)"></i>
<i style="top:276px;background:linear-gradient(90deg,#6bccef 0px,#62c6ed 30px,#58bfea 60px,#4cb7e7 90px,#41afe4 120px,#35a6e1 150px,#2b9edf 180px,#2196dd 210px,#198ddb 240px,#1385d9 270px,#0d7dd7 300px,#0977d6 330px,#0773d6 360px,#0571d5 390px,#0570d5 420px,#056fd5 450px,#066fd5 480px,#066fd6 510px,#076fd7 540px,#0870d7 570px,#0870d8 600px,#0870d8 630px,#076fd7 660px,#076fd7 670px)"></i>
<i style="top:280px;background:linear-gradient(90deg,#6ecdef 0px,#65c8ed 30px,#5ac1ea 60px,#4fb8e7 90px,#43b0e4 120px,#37a7e2 150px,#2c9fdf 180px,#2297dd 210px,#1a8edb 240px,#1385d9 270px,#0e7ed8 300px,#0978d7 330px,#0774d6 360px,#0671d5 390px,#0570d5 420px,#056fd5 450px,#066fd6 480px,#066fd6 510px,#0770d7 540px,#0870d8 570px,#0871d9 600px,#0871d9 630px,#0870d8 660px,#086fd7 670px)"></i>
<i style="top:284px;background:linear-gradient(90deg,#71cff0 0px,#68c9ed 30px,#5dc2eb 60px,#51bae8 90px,#44b1e5 120px,#38a9e2 150px,#2da0e0 180px,#2398dd 210px,#1b8fdb 240px,#1486da 270px,#0e7ed8 300px,#0a78d7 330px,#0774d6 360px,#0672d6 390px,#0570d6 420px,#0570d6 450px,#066fd6 480px,#0670d7 510px,#0770d7 540px,#0871d8 570px,#0871d9 600px,#0871d9 630px,#0870d8 660px,#086fd8 670px)"></i>
<i style="top:288px;background:linear-gradient(90deg,#73d0f0 0px,#6acbee 30px,#5fc3eb 60px,#53bbe8 90px,#46b2e5 120px,#3aaae2 150px,#2ea1e0 180px,#2498de 210px,#1b8fdc 240px,#1487da 270px,#0e7fd8 300px,#0a78d7 330px,#0775d6 360px,#0672d6 390px,#0571d6 420px,#0570d6 450px,#0670d6 480px,#0770d7 510px,#0770d8 540px,#0871d8 570px,#0871d9 600px,#0871d9 630px,#0870d8 660px,#0870d8 670px)"></i>
<i style="top:292px;background:linear-gradient(90deg,#76d2f0 0px,#6dccee 30px,#62c5ec 60px,#55bce9 90px,#48b4e6 120px,#3babe3 150px,#2fa2e0 180px,#2599de 210px,#1c90dc 240px,#1587da 270px,#0f7fd9 300px,#0a79d7 330px,#0775d7 360px,#0673d6 390px,#0571d6 420px,#0570d6 450px,#0670d7 480px,#0770d7 510px,#0771d8 540px,#0871d9 570px,#0971d9 600px,#0871da 630px,#0870d9 660px,#0870d8 670px)"></i>
<i style="top:296px;background:linear-gradient(90deg,#79d3f1 0px,#70cdef 30px,#64c6ec 60px,#57bee9 90px,#4ab5e6 120px,#3dace3 150px,#31a3e1 180px,#269ade 210px,#1d91dc 240px,#1588da 270px,#0f80d9 300px,#0a79d8 330px,#0875d7 360px,#0673d7 390px,#0671d6 420px,#0671d7 450px,#0670d7 480px,#0771d7 510px,#0871d8 540px,#0871d9 570px,#0972da 600px,#0872da 630px,#0871d9 660px,#0870d8 670px)"></i>
<i style="top:300px;background:linear-gradient(90deg,#7cd4f1 0px,#73cfef 30px,#67c7ed 60px,#59bfe9 90px,#4cb6e6 120px,#3eade4 150px,#32a4e1 180px,#279bdf 210px,#1d92dd 240px,#1689db 270px,#0f80d9 300px,#0b7ad8 330px,#0876d7 360px,#0673d7 390px,#0672d7 420px,#0671d7 450px,#0671d7 480px,#0771d8 510px,#0871d8 540px,#0872d9 570px,#0972da 600px,#0972da 630px,#0871d9 660px,#0870d9 670px)"></i>
<i style="top:304px;background:linear-gradient(90deg,#7fd6f2 0px,#75d0f0 30px,#69c9ed 60px,#5cc0ea 90px,#4db7e7 120px,#3faee4 150px,#33a5e1 180px,#289cdf 210px,#1e92dd 240px,#1689db 270px,#1081da 300px,#0b7ad8 330px,#0876d8 360px,#0674d7 390px,#0672d7 420px,#0671d7 450px,#0671d7 480px,#0771d8 510px,#0871d9 540px,#0872d9 570px,#0972da 600px,#0972da 630px,#0871da 660px,#0871d9 670px)"></i>
<i style="top:308px;background:linear-gradient(90deg,#81d7f2 0px,#78d1f0 30px,#6ccaed 60px,#5ec1ea 90px,#4fb8e7 120px,#41afe4 150px,#34a6e2 180px,#289ddf 210px,#1f93dd 240px,#178adb 270px,#1082da 300px,#0b7bd9 330px,#0877d8 360px,#0774d7 390px,#0672d7 420px,#0672d7 450px,#0671d8 480px,#0771d8 510px,#0872d9 540px,#0872da 570px,#0972da 600px,#0972da 630px,#0871da 660px,#0871d9 670px)"></i>
<i style="top:312px;background:linear-gradient(90deg,#84d8f3 0px,#7bd3f0 30px,#6ecbee 60px,#60c2eb 90px,#51b9e7 120px,#42b0e5 150px,#35a7e2 180px,#299de0 210px,#1f94de 240px,#178bdc 270px,#1182da 300px,#0c7cd9 330px,#0977d8 360px,#0775d8 390px,#0673d7 420px,#0672d8 450px,#0672d8 480px,#0772d8 510px,#0872d9 540px,#0972da 570px,#0973db 600px,#0973db 630px,#0972da 660px,#0871d9 670px)"></i>
<i style="top:316px;background:linear-gradient(90deg,#87daf3 0px,#7dd4f1 30px,#70ccee 60px,#61c3eb 90px,#52bae8 120px,#43b1e5 150px,#36a8e2 180px,#2a9ee0 210px,#2095de 240px,#188bdc 270px,#1183da 300px,#0c7cd9 330px,#0978d8 360px,#0775d8 390px,#0673d8 420px,#0672d8 450px,#0672d8 480px,#0772d9 510px,#0872d9 540px,#0973da 570px,#0973db 600px,#0973db 630px,#0972da 660px,#0871da 670px)"></i>
<i style="top:320px;background:linear-gradient(90deg,#89dbf3 0px,#80d5f1 30px,#73cdee 60px,#63c4eb 90px,#54bbe8 120px,#45b2e5 150px,#37a8e3 180px,#2b9fe0 210px,#2195de 240px,#188cdc 270px,#1184db 300px,#0c7dda 330px,#0978d9 360px,#0775d8 390px,#0674d8 420px,#0673d8 450px,#0772d8 480px,#0772d9 510px,#0872da 540px,#0973da 570px,#0973db 600px,#0973db 630px,#0972da 660px,#0872da 670px)"></i>
<i style="top:324px;background:linear-gradient(90deg,#8cdcf4 0px,#82d6f2 30px,#75ceef 60px,#65c5ec 90px,#55bce8 120px,#46b2e5 150px,#38a9e3 180px,#2ca0e1 210px,#2196de 240px,#198ddd 270px,#1284db 300px,#0d7dda 330px,#0979d9 360px,#0776d8 390px,#0774d8 420px,#0673d8 450px,#0772d9 480px,#0772d9 510px,#0873da 540px,#0973db 570px,#0973db 600px,#0973db 630px,#0972db 660px,#0972da 670px)"></i>
<i style="top:328px;background:linear-gradient(90deg,#8eddf4 0px,#84d7f2 30px,#77d0ef 60px,#67c6ec 90px,#56bde9 120px,#47b3e6 150px,#39aae3 180px,#2ca0e1 210px,#2296df 240px,#198ddd 270px,#1285db 300px,#0d7eda 330px,#0a79d9 360px,#0876d9 390px,#0774d8 420px,#0673d8 450px,#0773d9 480px,#0773d9 510px,#0873da 540px,#0973db 570px,#0974db 600px,#0973db 630px,#0972db 660px,#0972da 670px)"></i>
<i style="top:332px;background:linear-gradient(90deg,#90def4 0px,#87d8f2 30px,#79d1ef 60px,#69c7ec 90px,#58bee9 120px,#48b4e6 150px,#39aae3 180px,#2da1e1 210px,#2297df 240px,#1a8edd 270px,#1385dc 300px,#0d7fda 330px,#0a7ada 360px,#0877d9 390px,#0775d9 420px,#0774d9 450px,#0773d9 480px,#0773d9 510px,#0873da 540px,#0974db 570px,#0974db 600px,#0974dc 630px,#0973db 660px,#0972da 670px)"></i>
<i style="top:336px;background:linear-gradient(90deg,#93dff5 0px,#89daf3 30px,#7bd2f0 60px,#6ac8ec 90px,#59bee9 120px,#49b5e6 150px,#3aabe4 180px,#2ea1e1 210px,#2398df 240px,#1a8ede 270px,#1386dc 300px,#0e7fdb 330px,#0a7bda 360px,#0877d9 390px,#0775d9 420px,#0774d9 450px,#0773d9 480px,#0873da 510px,#0874da 540px,#0974db 570px,#0974dc 600px,#0974dc 630px,#0973db 660px,#0972db 670px)"></i>
<i style="top:340px;background:linear-gradient(90deg,#95e0f5 0px,#8bdbf3 30px,#7dd3f0 60px,#6cc9ed 90px,#5abfe9 120px,#4ab5e7 150px,#3bace4 180px,#2ea2e2 210px,#2398e0 240px,#1a8fde 270px,#1387dc 300px,#0e80db 330px,#0a7bda 360px,#0878da 390px,#0776d9 420px,#0774d9 450px,#0774d9 480px,#0874da 510px,#0874db 540px,#0974db 570px,#0a74dc 600px,#0a74dc 630px,#0973db 660px,#0972db 670px)"></i>
<i style="top:344px;background:linear-gradient(90deg,#97e1f5 0px,#8ddcf3 30px,#7ed3f0 60px,#6dcaed 90px,#5bc0ea 120px,#4bb6e7 150px,#3cace4 180px,#2fa3e2 210px,#2499e0 240px,#1b90de 270px,#1487dd 300px,#0e81db 330px,#0b7cda 360px,#0878da 390px,#0776d9 420px,#0775d9 450px,#0774da 480px,#0874da 510px,#0874db 540px,#0974db 570px,#0a74dc 600px,#0a74dc 630px,#0973db 660px,#0973db 670px)"></i>
<i style="top:348px;background:linear-gradient(90deg,#99e2f6 0px,#8fddf4 30px,#80d4f1 60px,#6ecbed 90px,#5cc1ea 120px,#4cb7e7 150px,#3cade4 180px,#2fa3e2 210px,#249ae0 240px,#1b90de 270px,#1488dd 300px,#0f81dc 330px,#0b7cdb 360px,#0979da 390px,#0777da 420px,#0775da 450px,#0774da 480px,#0874da 510px,#0974db 540px,#0974dc 570px,#0a75dc 600px,#0a74dc 630px,#0973db 660px,#0973db 670px)"></i>
<i style="top:352px;background:linear-gradient(90deg,#9be3f6 0px,#91ddf4 30px,#82d5f1 60px,#70cbed 90px,#5dc1ea 120px,#4cb7e7 150px,#3dade5 180px,#30a4e2 210px,#259ae1 240px,#1c91df 270px,#1489dd 300px,#0f82dc 330px,#0b7ddb 360px,#0979da 390px,#0877da 420px,#0775da 450px,#0775da 480px,#0874da 510px,#0974db 540px,#0975dc 570px,#0a75dc 600px,#0a74dc 630px,#0973dc 660px,#0973db 670px)"></i>
<i style="top:356px;background:linear-gradient(90deg,#9de4f6 0px,#93def4 30px,#83d6f1 60px,#71ccee 90px,#5ec2ea 120px,#4db8e7 150px,#3eaee5 180px,#30a4e3 210px,#259be1 240px,#1c92df 270px,#1589de 300px,#0f83dc 330px,#0b7edb 360px,#097adb 390px,#0877da 420px,#0776da 450px,#0775da 480px,#0875db 510px,#0975db 540px,#0975dc 570px,#0a75dc 600px,#0a75dc 630px,#0974dc 660px,#0973db 670px)"></i>
<i style="top:360px;background:linear-gradient(90deg,#9ee5f7 0px,#95dff4 30px,#85d7f1 60px,#72cdee 90px,#5fc2ea 120px,#4eb8e8 150px,#3eaee5 180px,#31a5e3 210px,#269be1 240px,#1c92df 270px,#158ade 300px,#1083dd 330px,#0c7edc 360px,#097adb 390px,#0878da 420px,#0776da 450px,#0875da 480px,#0875db 510px,#0975db 540px,#0975dc 570px,#0a75dc 600px,#0a75dc 630px,#0974dc 660px,#0973db 670px)"></i>
<i style="top:364px;background:linear-gradient(90deg,#a0e6f7 0px,#96e0f5 30px,#86d7f1 60px,#73cdee 90px,#60c3eb 120px,#4eb9e8 150px,#3fafe5 180px,#31a5e3 210px,#269ce1 240px,#1d93e0 270px,#158bde 300px,#1084dd 330px,#0c7fdc 360px,#097bdb 390px,#0878db 420px,#0877da 450px,#0876db 480px,#0875db 510px,#0975db 540px,#0975dc 570px,#0a75dc 600px,#0a75dc 630px,#0974dc 660px,#0973db 670px)"></i>
<i style="top:368px;background:linear-gradient(90deg,#a1e7f7 0px,#98e1f5 30px,#87d8f2 60px,#74ceee 90px,#61c3eb 120px,#4fb9e8 150px,#3fafe5 180px,#32a6e3 210px,#269ce2 240px,#1d93e0 270px,#168bdf 300px,#1085dd 330px,#0c7fdc 360px,#0a7cdc 390px,#0879db 420px,#0877db 450px,#0876db 480px,#0876db 510px,#0975dc 540px,#0976dc 570px,#0a76dd 600px,#0a75dd 630px,#0974dc 660px,#0973dc 670px)"></i>
<i style="top:372px;background:linear-gradient(90deg,#a3e7f7 0px,#99e1f5 30px,#88d9f2 60px,#75ceee 90px,#61c4eb 120px,#4fbae8 150px,#3fb0e6 180px,#32a6e4 210px,#279de2 240px,#1d94e0 270px,#168cdf 300px,#1085de 330px,#0c80dd 360px,#0a7cdc 390px,#0879db 420px,#0877db 450px,#0876db 480px,#0876db 510px,#0976dc 540px,#0a76dc 570px,#0a76dd 600px,#0a75dd 630px,#0974dc 660px,#0974dc 670px)"></i>
<i style="top:376px;background:linear-gradient(90deg,#a4e8f7 0px,#9ae2f5 30px,#89d9f2 60px,#75cfee 90px,#62c4eb 120px,#50bae8 150px,#40b0e6 180px,#32a7e4 210px,#279de2 240px,#1e94e1 270px,#168ddf 300px,#1186de 330px,#0d81dd 360px,#0a7ddc 390px,#097adb 420px,#0878db 450px,#0877db 480px,#0876db 510px,#0976dc 540px,#0a76dc 570px,#0a76dd 600px,#0a75dd 630px,#0974dc 660px,#0974dc 670px)"></i>
<i style="top:380px;background:linear-gradient(90deg,#a5e8f7 0px,#9be2f5 30px,#89d9f2 60px,#76cfee 90px,#62c5eb 120px,#50bae8 150px,#40b0e6 180px,#32a7e4 210px,#279ee2 240px,#1e95e1 270px,#168de0 300px,#1187de 330px,#0d81dd 360px,#0a7ddc 390px,#097adc 420px,#0878db 450px,#0877db 480px,#0876dc 510px,#0976dc 540px,#0a76dd 570px,#0a76dd 600px,#0a76dd 630px,#0974dc 660px,#0974dc 670px)"></i>
<i style="top:384px;background:linear-gradient(90deg,#a5e9f8 0px,#9be3f5 30px,#8adaf2 60px,#76d0ef 90px,#62c5eb 120px,#50bbe8 150px,#40b1e6 180px,#33a7e4 210px,#279ee3 240px,#1e96e1 270px,#178ee0 300px,#1187df 330px,#0d82de 360px,#0a7edd 390px,#097bdc 420px,#0879dc 450px,#0877db 480px,#0977dc 510px,#0976dc 540px,#0a76dd 570px,#0a76dd 600px,#0a76dd 630px,#0975dc 660px,#0974dc 670px)"></i>
<i style="top:388px;background:linear-gradient(90deg,#a6e9f8 0px,#9ce3f5 30px,#8adaf2 60px,#76d0ef 90px,#63c5eb 120px,#50bbe9 150px,#40b1e6 180px,#33a8e5 210px,#289fe3 240px,#1e96e2 270px,#178ee0 300px,#1188df 330px,#0d82de 360px,#0b7edd 390px,#097bdc 420px,#0879dc 450px,#0878dc 480px,#0977dc 510px,#0977dc 540px,#0a77dd 570px,#0a76dd 600px,#0a76dd 630px,#0975dc 660px,#0974dc 670px)"></i>
<i style="top:392px;background:linear-gradient(90deg,#a6eaf8 0px,#9ce4f5 30px,#8bdbf2 60px,#77d0ef 90px,#63c5eb 120px,#50bbe9 150px,#41b1e7 180px,#33a8e5 210px,#289fe3 240px,#1f97e2 270px,#178fe1 300px,#1288df 330px,#0e83de 360px,#0b7fdd 390px,#097cdc 420px,#0879dc 450px,#0878dc 480px,#0977dc 510px,#0977dc 540px,#0a77dd 570px,#0a77dd 600px,#0a76dd 630px,#0975dc 660px,#0974dc 670px)"></i>
<i style="top:396px;background:linear-gradient(90deg,#a6eaf8 0px,#9ce4f5 30px,#8bdbf2 60px,#77d0ef 90px,#63c6eb 120px,#50bbe9 150px,#41b2e7 180px,#33a8e5 210px,#28a0e4 240px,#1f97e2 270px,#1790e1 300px,#1289e0 330px,#0e84df 360px,#0b7fde 390px,#097cdd 420px,#087adc 450px,#0878dc 480px,#0978dc 510px,#0977dd 540px,#0a77dd 570px,#0a77dd 600px,#0a76dd 630px,#0975dd 660px,#0974dc 670px)"></i>
<i style="top:400px;background:linear-gradient(90deg,#a7eaf8 0px,#9ce4f5 30px,#8bdbf2 60px,#77d0ef 90px,#63c6eb 120px,#50bce9 150px,#41b2e7 180px,#33a9e5 210px,#28a0e4 240px,#1f98e3 270px,#1890e1 300px,#128ae0 330px,#0e84df 360px,#0b80de 390px,#097ddd 420px,#097adc 450px,#0879dc 480px,#0978dc 510px,#0977dd 540px,#0a77dd 570px,#0a77dd 600px,#0a76dd 630px,#0975dd 660px,#0974dc 670px)"></i>
<i style="top:404px;background:linear-gradient(90deg,#a7eaf8 0px,#9ce4f5 30px,#8bdbf2 60px,#76d1ef 90px,#62c6eb 120px,#50bce9 150px,#40b2e7 180px,#33a9e5 210px,#28a0e4 240px,#1f98e3 270px,#1891e2 300px,#128ae0 330px,#0e85df 360px,#0b81de 390px,#0a7ddd 420px,#097bdd 450px,#0979dc 480px,#0978dc 510px,#0978dd 540px,#0a77dd 570px,#0a77dd 600px,#0a76dd 630px,#0975dd 660px,#0975dc 670px)"></i>
<i style="top:408px;background:linear-gradient(90deg,#a6eaf8 0px,#9be4f5 30px,#8adbf2 60px,#76d1ef 90px,#62c6eb 120px,#50bce9 150px,#40b2e7 180px,#33aae6 210px,#28a1e4 240px,#1f99e3 270px,#1891e2 300px,#128be1 330px,#0e85e0 360px,#0b81df 390px,#0a7ede 420px,#097bdd 450px,#0979dd 480px,#0978dd 510px,#0978dd 540px,#0a78dd 570px,#0a77de 600px,#0a77dd 630px,#0975dd 660px,#0975dc 670px)"></i>
<i style="top:412px;background:linear-gradient(90deg,#a6eaf8 0px,#9be4f5 30px,#8adbf2 60px,#76d1ef 90px,#62c6eb 120px,#50bce9 150px,#40b3e7 180px,#33aae6 210px,#28a1e5 240px,#1f99e4 270px,#1892e2 300px,#138ce1 330px,#0e86e0 360px,#0c82df 390px,#0a7ede 420px,#097cdd 450px,#097add 480px,#0979dd 510px,#0978dd 540px,#0a78de 570px,#0a78de 600px,#0a77de 630px,#0975dd 660px,#0975dd 670px)"></i>
<i style="top:416px;background:linear-gradient(90deg,#a6eaf8 0px,#9ae4f5 30px,#89dbf2 60px,#75d1ef 90px,#61c6eb 120px,#4fbce9 150px,#40b3e7 180px,#33aae6 210px,#28a2e5 240px,#1f9ae4 270px,#1893e3 300px,#138ce2 330px,#0f87e0 360px,#0c82df 390px,#0a7fde 420px,#097cdd 450px,#097add 480px,#0979dd 510px,#0978dd 540px,#0a78de 570px,#0a78de 600px,#0a77de 630px,#0976dd 660px,#0975dd 670px)"></i>
<i style="top:420px;background:linear-gradient(90deg,#a5eaf8 0px,#9ae4f5 30px,#89dbf2 60px,#75d1ee 90px,#61c6eb 120px,#4fbce9 150px,#40b3e8 180px,#33aae6 210px,#28a2e5 240px,#1f9ae4 270px,#1893e3 300px,#138de2 330px,#0f87e1 360px,#0c83e0 390px,#0a7fde 420px,#097cde 450px,#097add 480px,#0979dd 510px,#0979dd 540px,#0a78de 570px,#0a78de 600px,#0a77de 630px,#0976dd 660px,#0975dd 670px)"></i>
<i style="top:424px;background:linear-gradient(90deg,#a5eaf7 0px,#99e4f5 30px,#88dbf2 60px,#74d0ee 90px,#60c6eb 120px,#4fbce9 150px,#3fb3e8 180px,#33abe7 210px,#28a3e6 240px,#1f9be5 270px,#1894e3 300px,#138de2 330px,#0f88e1 360px,#0c83e0 390px,#0a80df 420px,#097dde 450px,#097bdd 480px,#097add 510px,#0a79de 540px,#0a79de 570px,#0a78de 600px,#0a77de 630px,#0976dd 660px,#0975dd 670px)"></i>
<i style="top:428px;background:linear-gradient(90deg,#a4eaf7 0px,#98e4f5 30px,#87dbf2 60px,#73d0ee 90px,#5fc6eb 120px,#4ebce9 150px,#3fb3e8 180px,#33abe7 210px,#28a3e6 240px,#209be5 270px,#1994e4 300px,#138ee3 330px,#0f89e1 360px,#0c84e0 390px,#0a80df 420px,#097dde 450px,#097bde 480px,#097add 510px,#0a79de 540px,#0a79de 570px,#0a78de 600px,#0a77de 630px,#0976dd 660px,#0975dd 670px)"></i>
<i style="top:432px;background:linear-gradient(90deg,#a3eaf7 0px,#97e4f5 30px,#86dbf2 60px,#72d0ee 90px,#5fc6eb 120px,#4dbce9 150px,#3fb4e8 180px,#32abe7 210px,#28a3e6 240px,#209ce5 270px,#1995e4 300px,#138fe3 330px,#0f89e2 360px,#0c85e1 390px,#0a81df 420px,#097ede 450px,#097cde 480px,#097ade 510px,#0a79de 540px,#0a79de 570px,#0a78de 600px,#0a77de 630px,#0976dd 660px,#0975dd 670px)"></i>
<i style="top:436px;background:linear-gradient(90deg,#a2eaf7 0px,#96e3f5 30px,#85daf2 60px,#71d0ee 90px,#5ec6eb 120px,#4dbce9 150px,#3eb4e8 180px,#32ace7 210px,#28a4e7 240px,#209ce6 270px,#1995e5 300px,#138fe3 330px,#0f8ae2 360px,#0c85e1 390px,#0b81e0 420px,#097edf 450px,#097cde 480px,#097bde 510px,#0a7ade 540px,#0a79de 570px,#0a79df 600px,#0a78de 630px,#0976dd 660px,#0975dd 670px)"></i>
<i style="top:440px;background:linear-gradient(90deg,#a1eaf7 0px,#95e3f5 30px,#84daf1 60px,#70d0ee 90px,#5dc5eb 120px,#4cbcea 150px,#3eb4e8 180px,#32ace8 210px,#28a4e7 240px,#209de6 270px,#1996e5 300px,#1490e4 330px,#0f8ae3 360px,#0d86e1 390px,#0b82e0 420px,#0a7fdf 450px,#097cde 480px,#097bde 510px,#0a7ade 540px,#0a79df 570px,#0a79df 600px,#0a78de 630px,#0976de 660px,#0975dd 670px)"></i>
<i style="top:444px;background:linear-gradient(90deg,#a0eaf7 0px,#94e3f5 30px,#83daf1 60px,#6fcfee 90px,#5cc5eb 120px,#4bbcea 150px,#3db4e9 180px,#31ace8 210px,#28a5e7 240px,#1f9de6 270px,#1997e5 300px,#1490e4 330px,#108be3 360px,#0d86e2 390px,#0b82e0 420px,#0a7fdf 450px,#097dde 480px,#097bde 510px,#0a7adf 540px,#0a7adf 570px,#0a79df 600px,#0a78de 630px,#0976de 660px,#0976dd 670px)"></i>
<i style="top:448px;background:linear-gradient(90deg,#9fe9f7 0px,#93e2f4 30px,#81d9f1 60px,#6ecfee 90px,#5bc5eb 120px,#4bbcea 150px,#3db4e9 180px,#31ace8 210px,#27a5e8 240px,#1f9ee7 270px,#1997e6 300px,#1491e5 330px,#108ce3 360px,#0d87e2 390px,#0b83e1 420px,#0a80e0 450px,#097ddf 480px,#097bdf 510px,#0a7bdf 540px,#0a7adf 570px,#0a79df 600px,#0a78df 630px,#0976de 660px,#0876dd 670px)"></i>
<i style="top:452px;background:linear-gradient(90deg,#9ee9f7 0px,#91e2f4 30px,#80d9f1 60px,#6ccfee 90px,#5ac5eb 120px,#4abcea 150px,#3cb4e9 180px,#31ade8 210px,#27a5e8 240px,#1f9ee7 270px,#1998e6 300px,#1492e5 330px,#108ce4 360px,#0d87e3 390px,#0b83e1 420px,#0a80e0 450px,#097ddf 480px,#097cdf 510px,#0a7bdf 540px,#0a7adf 570px,#0a79df 600px,#0a78df 630px,#0976de 660px,#0876de 670px)"></i>
<i style="top:456px;background:linear-gradient(90deg,#9de9f7 0px,#90e2f4 30px,#7ed9f1 60px,#6bceed 90px,#59c4eb 120px,#49bcea 150px,#3cb4e9 180px,#30ade9 210px,#27a6e8 240px,#1f9fe8 270px,#1998e7 300px,#1492e6 330px,#108de4 360px,#0d88e3 390px,#0b84e2 420px,#0a81e0 450px,#097edf 480px,#097cdf 510px,#0a7bdf 540px,#0a7adf 570px,#0a79df 600px,#0a78df 630px,#0976de 660px,#0876de 670px)"></i>
<i style="top:460px;background:linear-gradient(90deg,#9ce9f7 0px,#8fe1f4 30px,#7dd8f1 60px,#69ceed 90px,#57c4eb 120px,#48bcea 150px,#3bb4e9 180px,#30ade9 210px,#27a6e9 240px,#1f9fe8 270px,#1999e7 300px,#1493e6 330px,#108de5 360px,#0d89e3 390px,#0b84e2 420px,#0a81e1 450px,#097ee0 480px,#097cdf 510px,#0a7be0 540px,#0a7be0 570px,#0a7ae0 600px,#0978df 630px,#0977de 660px,#0876de 670px)"></i>
<i style="top:464px;background:linear-gradient(90deg,#9ae8f7 0px,#8de1f4 30px,#7bd8f1 60px,#68cded 90px,#56c4eb 120px,#47bcea 150px,#3ab4ea 180px,#30ade9 210px,#27a6e9 240px,#1fa0e8 270px,#1999e8 300px,#1493e6 330px,#108ee5 360px,#0d89e4 390px,#0b85e2 420px,#0a82e1 450px,#097fe0 480px,#097de0 510px,#0a7ce0 540px,#0a7be0 570px,#0a7ae0 600px,#0979df 630px,#0877de 660px,#0876de 670px)"></i>
<i style="top:468px;background:linear-gradient(90deg,#99e8f7 0px,#8ce1f4 30px,#7ad7f0 60px,#66cded 90px,#55c4eb 120px,#46bcea 150px,#3ab5ea 180px,#2faeea 210px,#26a7e9 240px,#1fa0e9 270px,#199ae8 300px,#1494e7 330px,#108fe6 360px,#0d8ae4 390px,#0b86e3 420px,#0a82e1 450px,#0a7fe0 480px,#0a7de0 510px,#0a7ce0 540px,#0a7be0 570px,#0a7ae0 600px,#0979df 630px,#0877de 660px,#0876de 670px)"></i>
<i style="top:472px;background:linear-gradient(90deg,#98e8f6 0px,#8ae0f4 30px,#78d7f0 60px,#65cded 90px,#53c3eb 120px,#45bcea 150px,#39b5ea 180px,#2faeea 210px,#26a7ea 240px,#1fa1e9 270px,#199ae8 300px,#1495e7 330px,#108fe6 360px,#0d8ae5 390px,#0b86e3 420px,#0a83e2 450px,#0a80e1 480px,#0a7ee0 510px,#0a7ce0 540px,#0a7be1 570px,#0a7ae0 600px,#0979e0 630px,#0877df 660px,#0876de 670px)"></i>
<i style="top:476px;background:linear-gradient(90deg,#96e7f6 0px,#89e0f4 30px,#77d6f0 60px,#63cced 90px,#52c3eb 120px,#44bcea 150px,#38b5ea 180px,#2eaeea 210px,#26a8ea 240px,#1fa1ea 270px,#199be9 300px,#1495e8 330px,#1090e7 360px,#0d8be5 390px,#0b87e4 420px,#0a83e2 450px,#0a80e1 480px,#0a7ee0 510px,#0a7de1 540px,#0a7be1 570px,#0a7ae0 600px,#0979e0 630px,#0877df 660px,#0876de 670px)"></i>
<i style="top:480px;background:linear-gradient(90deg,#95e7f6 0px,#87dff4 30px,#75d6f0 60px,#62cced 90px,#51c3eb 120px,#43bceb 150px,#38b5eb 180px,#2eaeeb 210px,#26a8ea 240px,#1fa2ea 270px,#199be9 300px,#1496e8 330px,#1090e7 360px,#0e8ce6 390px,#0b87e4 420px,#0a84e3 450px,#0a80e1 480px,#0a7ee1 510px,#0a7de1 540px,#0a7ce1 570px,#0a7ae1 600px,#0979e0 630px,#0877df 660px,#0876de 670px)"></i>
<i style="top:484px;background:linear-gradient(90deg,#94e7f6 0px,#85dff4 30px,#73d5f0 60px,#60cbed 90px,#4fc3eb 120px,#42bceb 150px,#37b5eb 180px,#2dafeb 210px,#25a8eb 240px,#1fa2ea 270px,#199cea 300px,#1496e9 330px,#1091e8 360px,#0e8ce6 390px,#0c88e5 420px,#0a84e3 450px,#0a81e2 480px,#0a7fe1 510px,#0a7de1 540px,#0a7ce1 570px,#097be1 600px,#0979e0 630px,#0877df 660px,#0776df 670px)"></i>
<i style="top:488px;background:linear-gradient(90deg,#92e6f6 0px,#84dff3 30px,#72d5f0 60px,#5ecbed 90px,#4ec2eb 120px,#41bceb 150px,#36b5eb 180px,#2dafeb 210px,#25a9eb 240px,#1ea3eb 270px,#199dea 300px,#1497e9 330px,#1092e8 360px,#0e8de7 390px,#0c89e5 420px,#0a85e3 450px,#0a81e2 480px,#0a7fe2 510px,#0a7ee2 540px,#0a7ce2 570px,#097be1 600px,#0979e0 630px,#0877df 660px,#0776df 670px)"></i>
<i style="top:492px;background:linear-gradient(90deg,#91e6f6 0px,#82def3 30px,#70d5f0 60px,#5dcaed 90px,#4dc2eb 120px,#40bbeb 150px,#36b5ec 180px,#2cafec 210px,#25a9ec 240px,#1ea3eb 270px,#199deb 300px,#1497ea 330px,#1192e9 360px,#0e8de7 390px,#0c89e6 420px,#0a85e4 450px,#0a82e2 480px,#0a80e2 510px,#0a7ee2 540px,#0a7de2 570px,#097be2 600px,#0879e1 630px,#0777df 660px,#0776df 670px)"></i>
<i style="top:496px;background:linear-gradient(90deg,#8fe5f6 0px,#81def3 30px,#6ed4f0 60px,#5bcaed 90px,#4bc2eb 120px,#3fbceb 150px,#35b6ec 180px,#2cb0ec 210px,#24aaec 240px,#1ea4ec 270px,#199eeb 300px,#1498ea 330px,#1193e9 360px,#0e8ee8 390px,#0c8ae6 420px,#0a86e5 450px,#0a82e3 480px,#0a80e2 510px,#0a7ee3 540px,#0a7de2 570px,#097be2 600px,#0879e1 630px,#0777df 660px,#0776df 670px)"></i>
<i style="top:500px;background:linear-gradient(90deg,#8ee5f6 0px,#7fdef3 30px,#6cd4f0 60px,#59caed 90px,#4ac2ec 120px,#3ebcec 150px,#34b6ec 180px,#2cb0ed 210px,#24aaed 240px,#1ea4ec 270px,#199eec 300px,#1499eb 330px,#1193ea 360px,#0e8fe8 390px,#0c8ae7 420px,#0a87e5 450px,#0a83e3 480px,#0a81e3 510px,#0a7fe3 540px,#0a7de3 570px,#097be2 600px,#0879e1 630px,#0777e0 660px,#0776df 670px)"></i>
<i style="top:504px;background:linear-gradient(90deg,#8ce5f6 0px,#7dddf3 30px,#6bd4f0 60px,#58c9ed 90px,#49c2ec 120px,#3dbcec 150px,#33b6ed 180px,#2bb0ed 210px,#24aaed 240px,#1ea4ed 270px,#199fec 300px,#1499eb 330px,#1194ea 360px,#0e8fe9 390px,#0c8be7 420px,#0a87e6 450px,#0a84e4 480px,#0a81e4 510px,#0a7fe4 540px,#097de3 570px,#097be2 600px,#0879e1 630px,#0777e0 660px,#0676df 670px)"></i>
<i style="top:508px;background:linear-gradient(90deg,#8ae4f6 0px,#7cddf4 30px,#69d3f0 60px,#56c9ed 90px,#48c1ec 120px,#3cbcec 150px,#33b6ed 180px,#2bb1ed 210px,#24abed 240px,#1ea5ed 270px,#199fed 300px,#149aec 330px,#1195eb 360px,#0e90e9 390px,#0c8ce8 420px,#0b88e6 450px,#0a84e5 480px,#0a82e4 510px,#0a80e4 540px,#097ee4 570px,#097be3 600px,#0879e1 630px,#0777e0 660px,#0676df 670px)"></i>
<i style="top:512px;background:linear-gradient(90deg,#89e4f6 0px,#7adcf4 30px,#68d3f1 60px,#55c9ed 90px,#46c1ec 120px,#3cbced 150px,#32b7ed 180px,#2ab1ee 210px,#23abee 240px,#1ea5ee 270px,#19a0ed 300px,#149aec 330px,#1195eb 360px,#0e91ea 390px,#0c8ce8 420px,#0b88e7 450px,#0a85e5 480px,#0a82e5 510px,#0a80e5 540px,#097ee4 570px,#097ce3 600px,#0779e2 630px,#0677e0 660px,#0676e0 670px)"></i>
<i style="top:516px;background:linear-gradient(90deg,#87e3f6 0px,#78dcf4 30px,#66d3f1 60px,#53c9ee 90px,#45c2ed 120px,#3bbced 150px,#32b7ee 180px,#2ab1ee 210px,#23acee 240px,#1da6ee 270px,#18a0ee 300px,#149bed 330px,#1196ec 360px,#0e91ea 390px,#0c8de9 420px,#0b89e8 450px,#0a86e6 480px,#0a83e5 510px,#0981e5 540px,#097ee5 570px,#087ce3 600px,#0779e2 630px,#0676e0 660px,#0676e0 670px)"></i>
<i style="top:520px;background:linear-gradient(90deg,#85e3f6 0px,#77dbf4 30px,#64d3f1 60px,#52c9ee 90px,#44c2ed 120px,#3abcee 150px,#31b7ee 180px,#29b2ef 210px,#23acef 240px,#1da6ef 270px,#18a1ee 300px,#149bed 330px,#1196ec 360px,#0e92eb 390px,#0c8eea 420px,#0b8ae8 450px,#0a86e7 480px,#0984e6 510px,#0981e6 540px,#097fe5 570px,#087ce4 600px,#0779e2 630px,#0676e0 660px,#0576e0 670px)"></i>
<i style="top:524px;background:linear-gradient(90deg,#84e2f6 0px,#75dbf4 30px,#63d2f1 60px,#51c9ef 90px,#43c2ee 120px,#39bcee 150px,#30b7ef 180px,#29b2ef 210px,#22acef 240px,#1da7ef 270px,#18a1ef 300px,#149cee 330px,#1197ed 360px,#0e92eb 390px,#0c8eea 420px,#0b8be9 450px,#0a87e8 480px,#0984e7 510px,#0982e6 540px,#097fe5 570px,#087ce4 600px,#0779e2 630px,#0676e1 660px,#0576e0 670px)"></i>
<i style="top:528px;background:linear-gradient(90deg,#82e2f6 0px,#73dbf4 30px,#61d2f2 60px,#50c9ef 90px,#43c2ee 120px,#38bdef 150px,#30b8ef 180px,#28b2f0 210px,#22adf0 240px,#1da7f0 270px,#18a2ef 300px,#149dee 330px,#1198ed 360px,#0e93ec 390px,#0c8feb 420px,#0b8bea 450px,#0a88e8 480px,#0985e8 510px,#0982e7 540px,#097fe6 570px,#087ce4 600px,#0779e3 630px,#0576e1 660px,#0576e0 670px)"></i>
<i style="top:532px;background:linear-gradient(90deg,#80e1f6 0px,#71daf4 30px,#60d2f2 60px,#4fc9f0 90px,#42c2ef 120px,#38bdef 150px,#2fb8f0 180px,#28b3f0 210px,#22adf0 240px,#1da8f0 270px,#18a2f0 300px,#149def 330px,#1198ee 360px,#0e94ed 390px,#0c90eb 420px,#0b8cea 450px,#0a89e9 480px,#0986e8 510px,#0982e7 540px,#0980e6 570px,#087ce5 600px,#0679e3 630px,#0576e1 660px,#0576e0 670px)"></i>
<i style="top:536px;background:linear-gradient(90deg,#7ee1f6 0px,#70daf4 30px,#5fd2f2 60px,#4ecaf0 90px,#41c3ef 120px,#37bdf0 150px,#2fb8f0 180px,#28b3f1 210px,#22aef1 240px,#1da8f1 270px,#18a3f0 300px,#149eef 330px,#1199ee 360px,#0e94ed 390px,#0c90ec 420px,#0b8deb 450px,#0a8aea 480px,#0986e9 510px,#0983e8 540px,#0980e7 570px,#087de5 600px,#0679e3 630px,#0576e1 660px,#0576e1 670px)"></i>
<i style="top:540px;background:linear-gradient(90deg,#7de0f6 0px,#6ed9f4 30px,#5dd2f3 60px,#4dcaf1 90px,#40c3f0 120px,#37bef0 150px,#2eb9f1 180px,#27b4f1 210px,#21aef1 240px,#1ca9f1 270px,#18a3f1 300px,#149ef0 330px,#1199ef 360px,#0e95ee 390px,#0c91ed 420px,#0b8dec 450px,#0a8aeb 480px,#0987ea 510px,#0983e8 540px,#0980e7 570px,#087de5 600px,#0679e4 630px,#0576e1 660px,#0476e1 670px)"></i>
<i style="top:544px;background:linear-gradient(90deg,#7be0f6 0px,#6cd9f4 30px,#5cd2f3 60px,#4ccaf1 90px,#40c3f0 120px,#36bef1 150px,#2eb9f1 180px,#27b4f2 210px,#21aff2 240px,#1ca9f2 270px,#18a4f1 300px,#149ff0 330px,#119aef 360px,#0e95ee 390px,#0c91ed 420px,#0b8eec 450px,#0a8bec 480px,#0987ea 510px,#0984e9 540px,#0980e8 570px,#077de6 600px,#0679e4 630px,#0576e2 660px,#0476e1 670px)"></i>
<i style="top:548px;background:linear-gradient(90deg,#79dff6 0px,#6bd9f4 30px,#5bd2f3 60px,#4bcaf2 90px,#3fc4f1 120px,#36bef1 150px,#2db9f2 180px,#27b4f2 210px,#21aff2 240px,#1caaf2 270px,#18a4f2 300px,#149ff1 330px,#119af0 360px,#0e96ef 390px,#0c92ee 420px,#0b8fed 450px,#0a8cec 480px,#0988eb 510px,#0984ea 540px,#0881e8 570px,#077de6 600px,#067ae4 630px,#0477e2 660px,#0476e1 670px)"></i>
<i style="top:552px;background:linear-gradient(90deg,#78dff6 0px,#69d8f5 30px,#5ad2f4 60px,#4bcbf3 90px,#3fc4f2 120px,#35bff2 150px,#2dbaf2 180px,#26b5f3 210px,#21aff3 240px,#1caaf3 270px,#18a5f2 300px,#14a0f1 330px,#119bf0 360px,#0e97ef 390px,#0c93ee 420px,#0b8fee 450px,#0a8ced 480px,#0989ec 510px,#0985ea 540px,#0881e8 570px,#077de7 600px,#057ae4 630px,#0477e2 660px,#0476e2 670px)"></i>
<i style="top:556px;background:linear-gradient(90deg,#76dff6 0px,#68d8f5 30px,#59d2f4 60px,#4acbf3 90px,#3ec4f2 120px,#35bff2 150px,#2dbaf3 180px,#26b5f3 210px,#20b0f3 240px,#1cabf3 270px,#18a5f3 300px,#14a0f2 330px,#119cf1 360px,#0e97f0 390px,#0c93ef 420px,#0b90ee 450px,#0a8dee 480px,#0989ec 510px,#0985eb 540px,#0881e9 570px,#077ee7 600px,#057ae5 630px,#0477e2 660px,#0476e2 670px)"></i>
<i style="top:560px;background:linear-gradient(90deg,#75def6 0px,#67d8f5 30px,#57d2f4 60px,#49cbf4 90px,#3dc5f3 120px,#34bff3 150px,#2cbaf3 180px,#26b5f3 210px,#20b0f4 240px,#1cabf4 270px,#18a6f3 300px,#14a1f2 330px,#119cf1 360px,#0e98f0 390px,#0c94f0 420px,#0b90ef 450px,#0a8dee 480px,#098aed 510px,#0986eb 540px,#0882e9 570px,#077ee7 600px,#057ae5 630px,#0477e3 660px,#0476e2 670px)"></i>
<i style="top:564px;background:linear-gradient(90deg,#73def6 0px,#65d8f5 30px,#56d2f5 60px,#48cbf4 90px,#3dc5f3 120px,#34c0f3 150px,#2cbbf4 180px,#25b6f4 210px,#20b1f4 240px,#1babf4 270px,#17a6f4 300px,#14a1f3 330px,#119df2 360px,#0e98f1 390px,#0c94f0 420px,#0b91ef 450px,#0a8eef 480px,#098aed 510px,#0986ec 540px,#0882ea 570px,#077ee8 600px,#057ae5 630px,#0477e3 660px,#0376e2 670px)"></i>
<i style="top:568px;background:linear-gradient(90deg,#72def7 0px,#64d8f6 30px,#55d2f5 60px,#48cbf4 90px,#3cc5f4 120px,#33c0f4 150px,#2bbbf4 180px,#25b6f4 210px,#20b1f5 240px,#1bacf4 270px,#17a7f4 300px,#14a2f3 330px,#119df2 360px,#0e99f2 390px,#0c95f1 420px,#0b92f0 450px,#0a8eef 480px,#098bee 510px,#0886ec 540px,#0882ea 570px,#067ee8 600px,#057be6 630px,#0477e3 660px,#0376e2 670px)"></i>
</div>
<!-- streaks -->
<svg class="abs" style="left:0;top:0" width="670" height="571">
 <defs>
  <filter id="b1" x="-50%" y="-50%" width="200%" height="200%"><feGaussianBlur stdDeviation="0.7"/></filter>
  <filter id="b3" x="-50%" y="-50%" width="200%" height="200%"><feGaussianBlur stdDeviation="4"/></filter>
 </defs>
 <path d="M-10 446 Q30 420 70 398" stroke="rgba(255,255,255,0.55)" stroke-width="1.5" fill="none" filter="url(#b1)"/>
 <path d="M-10 412 Q25 385 60 352" stroke="rgba(255,255,255,0.35)" stroke-width="6" fill="none" filter="url(#b3)"/>
 <path d="M-10 497 Q25 486 70 478" stroke="rgba(110,200,90,0.9)" stroke-width="1.3" fill="none" filter="url(#b1)"/>
 <path d="M-10 502 Q25 492 70 484" stroke="rgba(255,255,255,0.35)" stroke-width="3" fill="none" filter="url(#b3)"/>
 <path d="M470 552 Q580 522 690 474" stroke="rgba(255,255,255,0.1)" stroke-width="14" fill="none" filter="url(#b3)"/>
 <defs><linearGradient id="arcg" x1="360" y1="0" x2="580" y2="0" gradientUnits="userSpaceOnUse"><stop offset="0" stop-color="#fff" stop-opacity="0.3"/><stop offset="0.3" stop-color="#fff" stop-opacity="0.9"/><stop offset="0.55" stop-color="#fff" stop-opacity="0.75"/><stop offset="1" stop-color="#fff" stop-opacity="0"/></linearGradient></defs>
 <path d="M360 574 Q425 564 580 570" stroke="url(#arcg)" stroke-width="2" fill="none" filter="url(#b1)"/>
 <path d="M360 580 Q425 570 560 576" stroke="rgba(255,255,255,0.25)" stroke-width="8" fill="none" filter="url(#b3)"/>
 <path d="M-10 503 Q25 492 66 480" stroke="rgba(255,255,255,0.4)" stroke-width="2.5" fill="none" filter="url(#b1)"/>
 <path d="M-10 568 Q40 556 110 566" stroke="rgba(255,255,255,0.14)" stroke-width="2" fill="none" filter="url(#b1)"/>
 <path d="M-10 575 Q40 563 110 573" stroke="rgba(255,255,255,0.1)" stroke-width="8" fill="none" filter="url(#b3)"/>
 <path d="M604 290 Q640 264 672 240" stroke="rgba(255,255,255,0.1)" stroke-width="1.2" fill="none" filter="url(#b1)"/>
 <g fill="rgba(255,255,255,0.7)" filter="url(#b1)">
  <circle cx="22" cy="468" r="0.9"/><circle cx="10" cy="484" r="0.8"/><circle cx="23" cy="478" r="0.7"/>
  <circle cx="36" cy="420" r="0.8"/><circle cx="16" cy="420" r="0.7"/><circle cx="40" cy="376" r="0.7"/>
  <circle cx="507" cy="541" r="0.8"/><circle cx="536" cy="552" r="0.8"/><circle cx="430" cy="559" r="0.7"/>
 </g>
</svg>

<!-- dialog behind -->
<div class="abs" style="left:0;top:213px;width:66px;height:140px;overflow:hidden">
  <div class="abs" style="left:0;top:0;width:66px;height:1px;background:#1a5a78"></div>
  <div class="abs" style="left:0;top:1px;width:66px;height:1px;background:#7cd6f4"></div>
  <div class="abs" style="left:0;top:2px;width:66px;height:19px;background:linear-gradient(#52c8f2,#58d4f8)"></div>
  <div class="abs" style="left:0;top:21px;width:66px;height:1px;background:#3a7a90"></div>
  <div class="abs" style="left:0;top:22px;width:66px;height:78px;background:#fff"></div>
  <div class="abs" style="left:0;top:100px;width:66px;height:33px;background:#efefef"></div>
  <div class="abs" style="left:0;top:133px;width:66px;height:1px;background:#f8f8f8"></div>
  <div class="abs" style="left:0;top:134px;width:66px;height:1px;background:#3a8a9a"></div>
  <div class="abs" style="left:0;top:135px;width:66px;height:4px;background:#a0e8f4"></div>
  <div class="abs" style="left:0;top:139px;width:66px;height:1px;background:#4a8a98"></div>
  <div class="abs" style="left:-1.2px;top:41.3px;font-size:8.8px;line-height:10.3px;color:#1a1a1a;white-space:nowrap;transform-origin:0 0;transform:scaleX(0.965);-webkit-text-stroke:0.2px #1a1a1a">antivirus has been<br>uter for the update<br><br>u want to restart</div>
</div>

<!-- icons peeking -->
<div class="abs" style="left:186px;top:506px;width:16px;height:16px;border-radius:0 0 8px 8px;background:#4a9a38"></div>
<div class="abs" style="left:176px;top:506px;width:12px;height:12px;background:rgba(150,120,200,0.6)"></div>
<div class="abs" style="left:178px;top:519px;width:10px;height:4px;background:#dfe6ec"></div>
<div class="abs" style="left:181px;top:520px;width:4px;height:2px;background:#1a3050"></div>
<div class="abs" style="left:234px;top:506px;width:26px;height:13px;background:#ffffff"></div>
<div class="abs" style="left:236px;top:519px;width:22px;height:3px;background:linear-gradient(#d8dee4,#a8b0b8)"></div>
<div class="abs" style="left:292px;top:506px;width:27px;height:13px;background:#c8a060"></div>
<div class="abs" style="left:284px;top:519px;width:8px;height:4px;background:#dfe6ec"></div>
<div class="abs" style="left:286px;top:520px;width:4px;height:2px;background:#1a3050"></div>
<div class="abs" style="left:292px;top:518px;width:26px;height:6px;background:linear-gradient(#5a4020,#2a1a08)"></div>
<div class="abs" style="left:346px;top:506px;width:20px;height:12px;background:#c08040"></div>
<div class="abs" style="left:337px;top:519px;width:8px;height:4px;background:#dfe6ec"></div>
<div class="abs" style="left:339px;top:520px;width:4px;height:2px;background:#1a3050"></div>
<div class="abs" style="left:344px;top:517px;width:19px;height:6px;border-radius:0 0 9px 9px;background:#18181c"></div>
<div class="abs" style="left:398px;top:506px;width:25px;height:12px;background:#e8e8f0"></div>
<div class="abs" style="left:391px;top:519px;width:7px;height:4px;background:#dfe6ec"></div>
<div class="abs" style="left:393px;top:520px;width:4px;height:2px;background:#1a3050"></div>
<div class="abs" style="left:398px;top:518px;width:24px;height:5px;background:linear-gradient(#c84858 0,#c84858 40%,#e8e8f0 60%,#4858a8 100%)"></div>

<!-- window -->
<div class="wout"></div>
<div class="abs" style="left:57px;top:300px;width:5px;height:218px;background:linear-gradient(rgba(200,255,255,0),rgba(200,255,255,0.22))"></div>
<div class="abs" style="left:62px;top:513px;width:200px;height:5px;background:linear-gradient(90deg,rgba(200,255,255,0.22),rgba(200,255,255,0))"></div>
<div class="content"></div>
<div class="abs" style="left:57px;top:55px;width:548px;height:20px;border-radius:5px 5px 0 0;background:rgba(0,80,215,0.12)"></div>
<div class="abs" style="left:490px;top:55px;width:114px;height:20px;border-radius:0 6px 0 0;background:linear-gradient(105deg,rgba(255,255,255,0) 0%,rgba(255,255,255,0.12) 30%,rgba(255,255,255,0.09) 100%)"></div>
<div class="glow"></div>
<div class="title">DG2 Launcher ver. 1.0.1844.1855 123764</div>
<svg class="abs" style="left:61px;top:60px" width="13" height="11" viewBox="0 0 13 11">
  <circle cx="2" cy="5.5" r="1.8" fill="#50c0c8" opacity="0.45"/>
  <ellipse cx="10.1" cy="5.5" rx="2" ry="2.2" fill="#d8bc78"/>
  <circle cx="6" cy="5.5" r="3.1" fill="#2a8088" stroke="#0c2a3c" stroke-width="1.1"/>
  <circle cx="5.6" cy="5" r="1.3" fill="#58b8b8" opacity="0.8"/>
  <circle cx="2.7" cy="5.5" r="0.75" fill="#0a2030"/>
  <circle cx="8.7" cy="5.4" r="0.8" fill="#0a2030"/>
</svg>
<!-- close button -->
<div class="abs" style="left:567px;top:55px;width:35px;height:15px;box-sizing:border-box;border:1px solid rgba(255,255,255,0.25);border-top:none;border-radius:0 0 4px 4px;"></div>
<div class="abs" style="left:568px;top:55px;width:33px;height:14px;box-sizing:border-box;border:1px solid rgba(0,30,70,0.18);border-top:none;border-radius:0 0 3px 3px;"></div>
<svg class="abs" style="left:579px;top:56px" width="12" height="12" viewBox="0 0 12 12">
  <path d="M3.2 3.4 L8.8 8.6 M8.8 3.4 L3.2 8.6" stroke="rgba(10,30,60,0.4)" stroke-width="3" stroke-linecap="round"/>
  <path d="M3.3 3.5 L8.7 8.5 M8.7 3.5 L3.3 8.5" stroke="#fff" stroke-width="1.8" stroke-linecap="butt"/>
</svg>

<!-- desktop icon labels -->
<div class="lab" style="left:164px;width:60px">CorelDRAW<br>X6 (64-Bit)</div>
<div class="lab" style="left:217px;width:60px">Новый<br>текстов...</div>
<div class="lab" style="left:271px;width:60px">SolveigMM<br>Video Splitter</div>
<div class="lab" style="left:324px;width:60px">AIMP3</div>
<div class="lab" style="left:377px;width:60px">Total<br>Command...</div>
</body></html>
